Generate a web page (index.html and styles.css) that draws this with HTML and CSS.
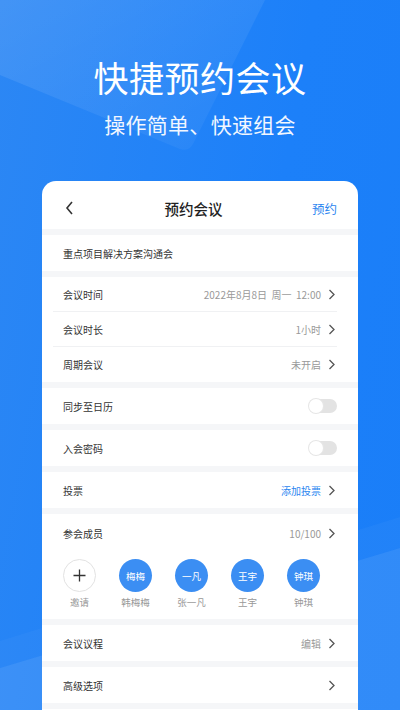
FILE: index.html
```html
<!DOCTYPE html>
<html>
<head>
	<title>快捷预约会议</title>
	<meta charset="utf-8">
	<link rel="stylesheet" href="styles.css">
</head>
<body>
	<div class="screen">
		<svg class="deco" width="400" height="710" viewBox="0 0 400 710">
			<defs>
				<linearGradient id="shine" x1="0" y1="0" x2="1" y2="1">
					<stop offset="0" stop-color="#fff" stop-opacity="0.11"/>
					<stop offset="1" stop-color="#fff" stop-opacity="0.03"/>
				</linearGradient>
			</defs>
			<path d="M0 0 L265 0 L194 142 Q190 152 180 149 L0 75 Z" fill="url(#shine)"/>
			<path d="M0 641 L400 517 L400 548 L0 668 Z" fill="#fff" fill-opacity="0.03"/>
			<path d="M0 668 L400 548 L400 710 L0 710 Z" fill="#fff" fill-opacity="0.1"/>
		</svg>

		<div class="hero">
			<h1 class="hero-title">快捷预约会议</h1>
			<p class="hero-sub">操作简单、快速组会</p>
		</div>

		<div class="card">
			<div class="head">
				<svg class="back" width="10" height="14" viewBox="0 0 10 14"><polyline points="7,1 2,7 7,13" fill="none" stroke="#333" stroke-width="1.6"/></svg>
				<div class="head-title">预约会议</div>
				<div class="head-btn">预约</div>
			</div>
			<div class="band"></div>
			<div class="row"><span class="label">重点项目解决方案沟通会</span></div>
			<div class="band"></div>
			<div class="row short">
				<span class="label">会议时间</span>
				<span class="value">2022年8月8日&nbsp;&nbsp;周一&nbsp;&nbsp;12:00</span>
				<svg class="arrow" width="9" height="11" viewBox="0 0 9 11"><polyline points="1.5,1 6,5.5 1.5,10" fill="none" stroke="#555" stroke-width="1.3"/></svg>
			</div>
			<div class="line"></div>
			<div class="row short">
				<span class="label">会议时长</span>
				<span class="value">1小时</span>
				<svg class="arrow" width="9" height="11" viewBox="0 0 9 11"><polyline points="1.5,1 6,5.5 1.5,10" fill="none" stroke="#555" stroke-width="1.3"/></svg>
			</div>
			<div class="line"></div>
			<div class="row mid">
				<span class="label">周期会议</span>
				<span class="value">未开启</span>
				<svg class="arrow" width="9" height="11" viewBox="0 0 9 11"><polyline points="1.5,1 6,5.5 1.5,10" fill="none" stroke="#555" stroke-width="1.3"/></svg>
			</div>
			<div class="band"></div>
			<div class="row">
				<span class="label">同步至日历</span>
				<span class="switch"><i></i></span>
			</div>
			<div class="band"></div>
			<div class="row">
				<span class="label">入会密码</span>
				<span class="switch"><i></i></span>
			</div>
			<div class="band"></div>
			<div class="row">
				<span class="label">投票</span>
				<span class="value blue">添加投票</span>
				<svg class="arrow" width="9" height="11" viewBox="0 0 9 11"><polyline points="1.5,1 6,5.5 1.5,10" fill="none" stroke="#555" stroke-width="1.3"/></svg>
			</div>
			<div class="band"></div>
			<div class="members">
				<div class="row">
					<span class="label">参会成员</span>
					<span class="value">10/100</span>
					<svg class="arrow" width="9" height="11" viewBox="0 0 9 11"><polyline points="1.5,1 6,5.5 1.5,10" fill="none" stroke="#555" stroke-width="1.3"/></svg>
				</div>
				<ul class="people">
					<li>
						<div class="avatar invite">
							<svg width="13" height="13" viewBox="0 0 13 13"><path d="M6.5 0.5 V12.5 M0.5 6.5 H12.5" stroke="#333" stroke-width="1.3"/></svg>
						</div>
						<span>邀请</span>
					</li>
					<li><div class="avatar">梅梅</div><span>韩梅梅</span></li>
					<li><div class="avatar">一凡</div><span>张一凡</span></li>
					<li><div class="avatar">王宇</div><span>王宇</span></li>
					<li><div class="avatar">钟琪</div><span>钟琪</span></li>
				</ul>
			</div>
			<div class="band"></div>
			<div class="row">
				<span class="label">会议议程</span>
				<span class="value">编辑</span>
				<svg class="arrow" width="9" height="11" viewBox="0 0 9 11"><polyline points="1.5,1 6,5.5 1.5,10" fill="none" stroke="#555" stroke-width="1.3"/></svg>
			</div>
			<div class="band"></div>
			<div class="row">
				<span class="label">高级选项</span>
				<span class="value"></span>
				<svg class="arrow" width="9" height="11" viewBox="0 0 9 11"><polyline points="1.5,1 6,5.5 1.5,10" fill="none" stroke="#555" stroke-width="1.3"/></svg>
			</div>
			<div class="band"></div>
		</div>
	</div>
</body>
</html>
```

FILE: styles.css
```css
*{margin:0;padding:0;list-style:none;box-sizing:border-box;}
body{font-family:'Noto Sans CJK SC','Noto Sans',sans-serif;background:#1f80f8;}
.screen{position:relative;width:400px;height:710px;overflow:hidden;background:linear-gradient(100deg,#2c87f4 0%,#1c80f9 60%,#1a7ef8 100%);}
.deco{position:absolute;left:0;top:0;}

.hero{position:relative;padding-top:55px;text-align:center;color:#fff;}
.hero-title{font-size:35px;line-height:44px;font-weight:400;letter-spacing:0.5px;}
.hero-sub{font-size:21px;line-height:30px;margin-top:10px;color:#f2f7ff;letter-spacing:0.3px;}

.card{position:relative;margin:42px 42px 0;background:#fff;border-radius:14px 14px 0 0;height:560px;}
.head{height:48px;padding:6px 21px 0;display:flex;align-items:center;justify-content:space-between;}
.back{display:block;margin-left:2px;}
.head-title{font-size:14.5px;color:#222;font-weight:500;}
.head-btn{font-size:12.5px;color:#2b86f0;}

.band{height:6px;background:#f5f6f8;}
.line{height:1px;background:#f0f1f3;margin:0 21px 0 11px;}

.row{height:36px;padding:0 21px;display:flex;align-items:center;font-size:10px;}
.row.short{height:34px;}
.row.mid{height:35px;}
.label{color:#333;flex:1;}
.value{color:#999;margin-right:7px;}
.value.blue{color:#2b86f0;}
.arrow{display:block;}

.switch{width:28px;height:14px;border-radius:7px;background:#e3e3e3;position:relative;}
.switch i{position:absolute;left:0;top:0;width:14px;height:14px;border-radius:50%;background:#fff;box-shadow:0 0 0 1px #e6e6e6;}

.members{height:105px;}
.members .row{height:38px;}
.people{display:flex;gap:23px;padding:7px 21px 0;}
.people li{width:33px;display:flex;flex-direction:column;align-items:center;}
.people li span{font-size:9.5px;color:#999;margin-top:4px;line-height:12px;white-space:nowrap;}
.avatar{width:33px;height:33px;border-radius:50%;background:#3b8ef3;color:#fff;font-size:9.5px;display:flex;align-items:center;justify-content:center;}
.avatar.invite{background:#fff;border:1px solid #e2e2e2;}
.avatar.invite svg{display:block;}
```
